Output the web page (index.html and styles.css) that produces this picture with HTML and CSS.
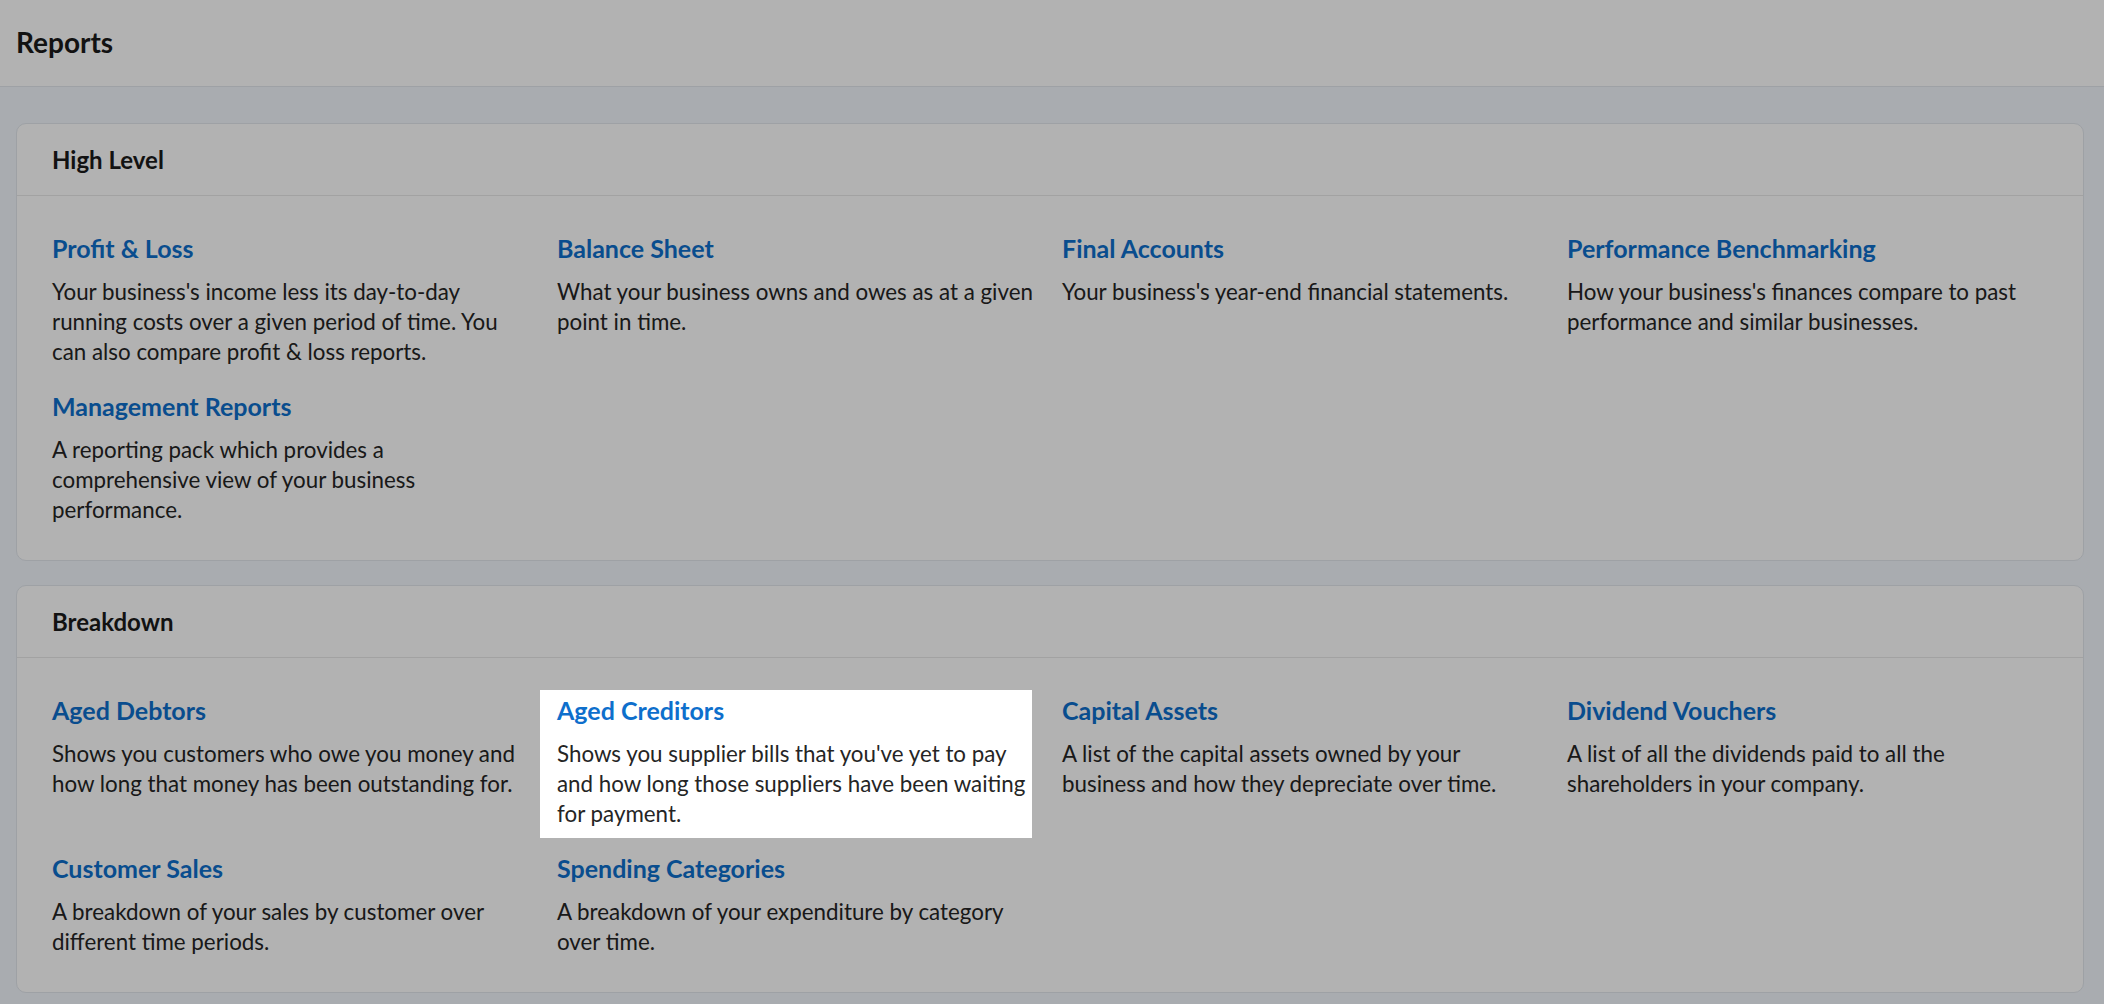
FILE: index.html
```html
<!DOCTYPE html>
<html lang="en">
<head>
  <meta charset="UTF-8" />
  <meta name="viewport" content="width=device-width, initial-scale=1.0"/>
  <title>Reports</title>
  <link rel="stylesheet" href="styles.css">
</head>
<body>
  <header class="page-header">
    <h1>Reports</h1>
  </header>

  <main class="container">
    <section class="report-card">
      <h2 class="report-card-title">High Level</h2>
      <div class="report-grid">
        <div class="report">
          <a href="#" class="report-link">Profit &amp; Loss</a>
          <p>Your business's income less its day-to-day running costs over a given period of time. You can also compare profit &amp; loss reports.</p>
        </div>
        <div class="report">
          <a href="#" class="report-link">Balance Sheet</a>
          <p>What your business owns and owes as at a given point in time.</p>
        </div>
        <div class="report">
          <a href="#" class="report-link">Final Accounts</a>
          <p>Your business's year-end financial statements.</p>
        </div>
        <div class="report">
          <a href="#" class="report-link">Performance Benchmarking</a>
          <p>How your business's finances compare to past performance and similar businesses.</p>
        </div>
        <div class="report">
          <a href="#" class="report-link">Management Reports</a>
          <p>A reporting pack which provides a comprehensive view of your business performance.</p>
        </div>
      </div>
    </section>

    <section class="report-card">
      <h2 class="report-card-title">Breakdown</h2>
      <div class="report-grid">
        <div class="report">
          <a href="#" class="report-link">Aged Debtors</a>
          <p>Shows you customers who owe you money and how long that money has been outstanding for.</p>
        </div>
        <div class="report spotlight">
          <a href="#" class="report-link">Aged Creditors</a>
          <p>Shows you supplier bills that you've yet to pay and how long those suppliers have been waiting for payment.</p>
        </div>
        <div class="report">
          <a href="#" class="report-link">Capital Assets</a>
          <p>A list of the capital assets owned by your business and how they depreciate over time.</p>
        </div>
        <div class="report">
          <a href="#" class="report-link">Dividend Vouchers</a>
          <p>A list of all the dividends paid to all the shareholders in your company.</p>
        </div>
        <div class="report">
          <a href="#" class="report-link">Customer Sales</a>
          <p>A breakdown of your sales by customer over different time periods.</p>
        </div>
        <div class="report">
          <a href="#" class="report-link">Spending Categories</a>
          <p>A breakdown of your expenditure by category over time.</p>
        </div>
      </div>
    </section>
  </main>
</body>
</html>
```

FILE: styles.css
```css
:root {
  --bg-color: #f2f6fc;
  --card-bg: #fff;
  --border-color: #e2e7ed;
  --divider-color: #e9e9e9;
  --heading-color: #1a1a1a;
  --text-color: #252525;
  --link-color: #0e6fcc;
}

body {
  font-family: Lato, "Liberation Sans", sans-serif;
  background-color: var(--bg-color);
  color: var(--text-color);
  margin: 0;
  padding: 0;
  min-height: 100vh;
}

.page-header {
  background-color: var(--card-bg);
  border-bottom: 1px solid var(--border-color);
  height: 86px;
  display: flex;
  align-items: center;
  padding-left: 16px;
}

.page-header h1 {
  margin: 0;
  font-size: 28px;
  font-weight: 700;
  color: var(--heading-color);
  padding-bottom: 2px;
}

.container {
  padding: 36px 20px 14px 16px;
  display: flex;
  flex-direction: column;
  gap: 24px;
}

.report-card {
  background-color: var(--card-bg);
  border: 1px solid var(--border-color);
  border-radius: 10px;
}

.report-card-title {
  margin: 0;
  height: 71px;
  display: flex;
  align-items: center;
  padding-left: 35px;
  border-bottom: 1px solid var(--divider-color);
  font-size: 24px;
  font-weight: 700;
  color: var(--heading-color);
}

.report-grid {
  display: grid;
  grid-template-columns: repeat(4, 1fr);
  column-gap: 24px;
  row-gap: 24px;
  padding: 37px 35px 35px 35px;
}

.report-link {
  display: block;
  font-size: 25px;
  line-height: 30px;
  font-weight: 700;
  color: var(--link-color);
  text-decoration: none;
}

.report p {
  margin: 14px 0 0;
  font-size: 22.35px;
  line-height: 30px;
}

/* guided tour highlight: everything else is dimmed */
.spotlight {
  position: relative;
  z-index: 10;
  background-color: #fff;
  padding: 5px 0 9px 17px;
  margin: -5px 6px -9px -17px;
  box-shadow: 0 0 0 4000px rgba(0, 0, 0, 0.3);
}
```
